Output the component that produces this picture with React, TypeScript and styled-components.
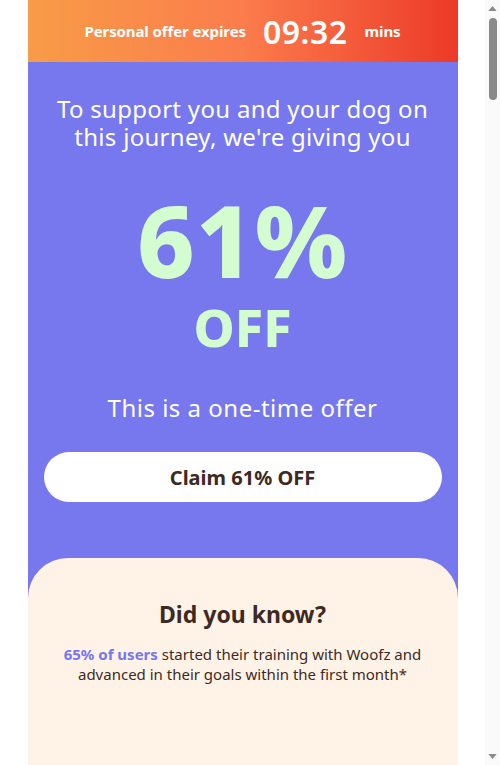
import React from "react";
import styled, { createGlobalStyle } from "styled-components";

const GlobalStyle = createGlobalStyle`
  html, body {
    margin: 0;
    padding: 0;
    background: #ffffff;
    font-family: "Noto Sans", "Open Sans", sans-serif;
  }
  body {
    padding-right: 15px;
  }
  ::-webkit-scrollbar {
    display: none;
  }
`;

const App = () => {
  return (
    <>
      <GlobalStyle />
      <Page>
        <TimerBar>
          <TimerLabel>Personal offer expires</TimerLabel>
          <TimerValue>09:32</TimerValue>
          <TimerLabel>mins</TimerLabel>
        </TimerBar>
        <OfferSection>
          <Lead>To support you and your dog on this journey, we're giving you</Lead>
          <Discount>
            <Percent>61%</Percent>
            <Off>OFF</Off>
          </Discount>
          <OneTime>This is a one-time offer</OneTime>
          <ClaimButton>Claim 61% OFF</ClaimButton>
        </OfferSection>
        <FactSection>
          <FactTitle>Did you know?</FactTitle>
          <FactText>
            <Highlight>65% of users</Highlight> started their training with Woofz and
            advanced in their goals within the first month*
          </FactText>
        </FactSection>
      </Page>
      <ScrollTrack>
        <ScrollArrow viewBox="0 0 10 6">
          <path d="M0 6 L5 0 L10 6 Z" />
        </ScrollArrow>
        <ScrollThumb />
        <ScrollSpacer />
        <ScrollArrow viewBox="0 0 10 6">
          <path d="M0 0 L10 0 L5 6 Z" />
        </ScrollArrow>
      </ScrollTrack>
    </>
  );
};

const Page = styled.div`
  max-width: 430px;
  margin: 0 auto;
  display: flex;
  flex-direction: column;
  background: #7777ee;
`;

const TimerBar = styled.div`
  height: 62px;
  display: flex;
  align-items: center;
  justify-content: center;
  gap: 17px;
  background: linear-gradient(90deg, #f89c47 0%, #fb7c4c 50%, #ec3a28 100%);
  color: #ffffff;
`;

const TimerLabel = styled.span`
  font-size: 15px;
  font-weight: 700;
  letter-spacing: -0.1px;
`;

const TimerValue = styled.span`
  font-size: 32px;
  font-weight: 600;
  letter-spacing: 0.5px;
`;

const OfferSection = styled.section`
  display: flex;
  flex-direction: column;
  align-items: center;
  padding: 33px 16px 56px;
  color: #ffffff;
  text-align: center;
`;

const Lead = styled.h2`
  margin: 0;
  max-width: 400px;
  font-size: 24px;
  line-height: 28px;
  font-weight: 400;
  letter-spacing: 0.3px;
`;

const Discount = styled.div`
  display: flex;
  flex-direction: column;
  align-items: center;
  margin-top: 33px;
  color: #d4fcd1;
  font-weight: 800;
`;

const Percent = styled.div`
  font-size: 100px;
  line-height: 110px;
  letter-spacing: 1px;
`;

const Off = styled.div`
  margin-top: 5px;
  font-size: 52px;
  line-height: 56px;
`;

const OneTime = styled.p`
  margin: 39px 0 0;
  font-size: 24px;
  line-height: 28px;
  letter-spacing: 0.5px;
`;

const ClaimButton = styled.button`
  margin-top: 30px;
  width: 100%;
  height: 50px;
  border: none;
  border-radius: 25px;
  background: #ffffff;
  color: #3e2a22;
  font-family: inherit;
  font-size: 20px;
  font-weight: 700;
  cursor: pointer;
`;

const FactSection = styled.section`
  min-height: 6200px;
  padding: 40px 24px;
  background: #fff3e8;
  border-radius: 40px 40px 0 0;
  text-align: center;
  color: #3e2a22;
`;

const FactTitle = styled.h3`
  margin: 0;
  font-size: 23px;
  line-height: 32px;
  font-weight: 700;
`;

const FactText = styled.p`
  margin: 14px auto 0;
  max-width: 360px;
  font-size: 15px;
  line-height: 20px;
`;

const Highlight = styled.span`
  color: #7777ee;
  font-weight: 700;
`;

const ScrollTrack = styled.div`
  position: fixed;
  top: 0;
  right: 0;
  bottom: 0;
  width: 15px;
  display: flex;
  flex-direction: column;
  align-items: center;
  padding: 6px 0;
  box-sizing: border-box;
  background: #fafafa;
`;

const ScrollArrow = styled.svg`
  width: 9px;
  height: 5px;
  fill: #8a8a8a;
  flex: none;
`;

const ScrollThumb = styled.div`
  margin-top: 7px;
  width: 8px;
  height: 82px;
  border-radius: 4px;
  background: #8a8a8a;
  flex: none;
`;

const ScrollSpacer = styled.div`
  flex: 1;
`;

export default App;
